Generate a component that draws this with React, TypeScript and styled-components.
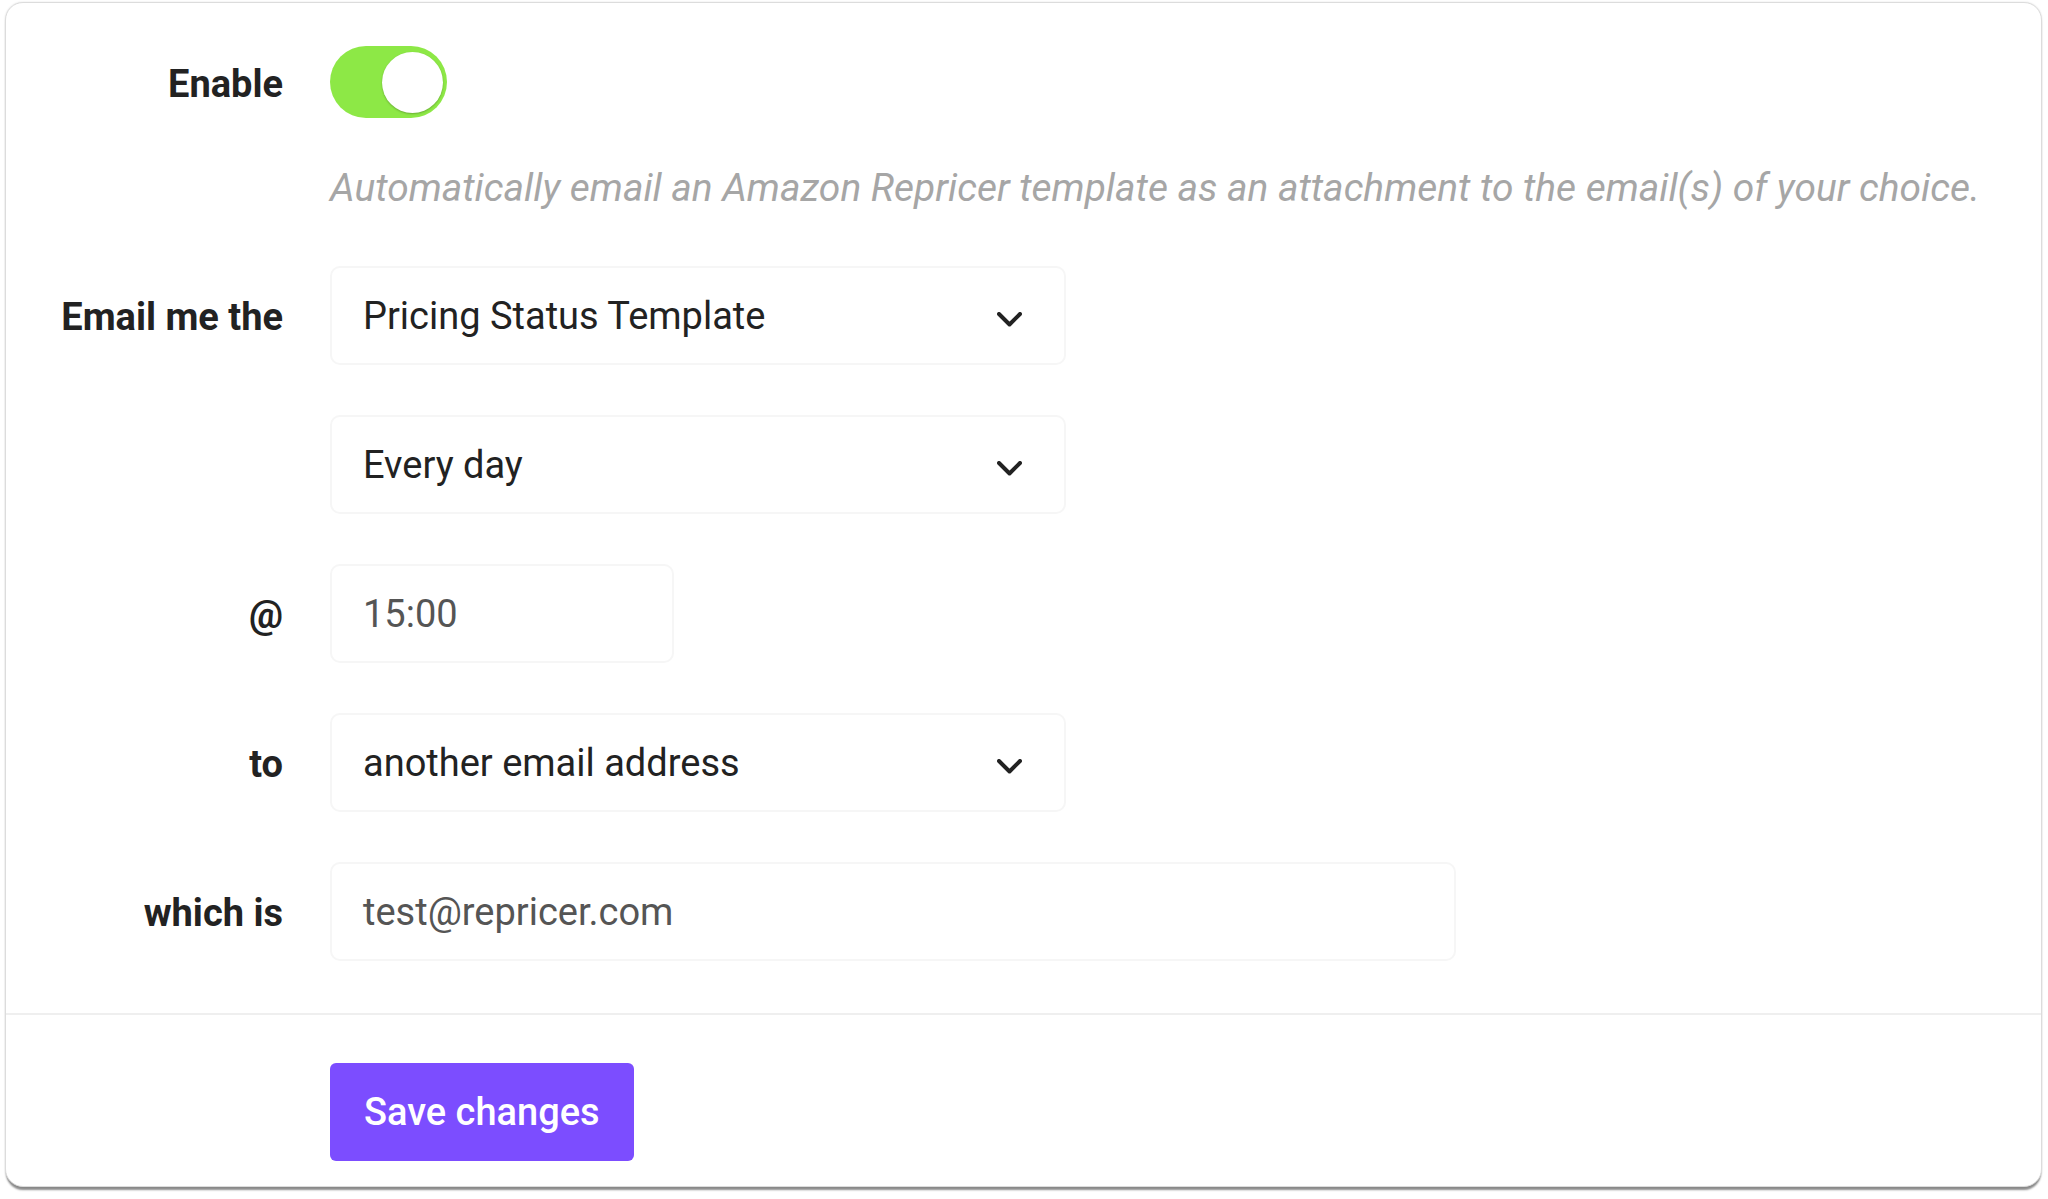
import { FC, ReactNode } from "react"
import styled, { createGlobalStyle } from "styled-components"

const GlobalStyle = createGlobalStyle`
  html, body {
    margin: 0;
    padding: 0;
    background: #ffffff;
  }
  body {
    font-family: Roboto, "Noto Sans", "Liberation Sans", sans-serif;
    color: #222222;
  }
`

const Page = styled.div`
  padding: 2px 6px 10px 5px;
`

const Card = styled.div`
  background: #ffffff;
  border: 1px solid #dcdcdc;
  border-radius: 18px;
  box-shadow: 0 4px 2px -1px rgba(0, 0, 0, 0.45), 0 0 2px rgba(0, 0, 0, 0.12);
  overflow: hidden;
`

const Form = styled.div`
  display: grid;
  grid-template-columns: 277px 1fr;
  column-gap: 47px;
  row-gap: 50px;
  align-items: center;
  padding: 43px 0 52px;
`

const Label = styled.div`
  text-align: right;
  font-size: 38px;
  font-weight: 700;
  color: #222222;
  line-height: 1.2;
  padding-top: 5px;
`

const Description = styled.div`
  font-size: 38.9px;
  font-style: italic;
  color: #a6a6a6;
  line-height: 43px;
  margin: -2px 0 7px;
  white-space: nowrap;
`

const Toggle = styled.div<{ $on: boolean }>`
  width: 117px;
  height: 72px;
  border-radius: 36px;
  background: ${({ $on }) => ($on ? "#8de846" : "#d0d0d0")};
  display: flex;
  align-items: center;
  justify-content: ${({ $on }) => ($on ? "flex-end" : "flex-start")};
  padding: 0 4px;
  box-sizing: border-box;
`

const Knob = styled.div`
  width: 61px;
  height: 61px;
  border-radius: 50%;
  background: #ffffff;
  box-shadow: 0 1px 2px rgba(0, 0, 0, 0.25);
`

const Box = styled.div<{ $width: number; $muted?: boolean }>`
  width: ${({ $width }) => $width}px;
  height: 99px;
  box-sizing: border-box;
  border: 2px solid #f6f6f6;
  border-radius: 10px;
  display: flex;
  align-items: center;
  justify-content: space-between;
  padding: 0 42px 0 31px;
  font-size: 38px;
  color: ${({ $muted }) => ($muted ? "#555555" : "#222222")};
`

const Chevron = styled.svg`
  width: 25px;
  height: 16px;
  margin-top: 8px;
  flex: none;
`

const Footer = styled.div`
  border-top: 2px solid #efefef;
  padding: 48px 0 25px 324px;
`

const SaveButton = styled.button`
  height: 98px;
  padding: 0 34px;
  border: none;
  border-radius: 6px;
  background: #7c4dff;
  color: #ffffff;
  font-family: Roboto, "Noto Sans", sans-serif;
  font-size: 38px;
  font-weight: 500;
  cursor: pointer;
`

const Select: FC<{ value: string; width?: number }> = ({ value, width = 736 }) => (
  <Box $width={width}>
    <span>{value}</span>
    <Chevron viewBox="0 0 25 16">
      <polyline
        points="2,2 12.5,12.5 23,2"
        fill="none"
        stroke="#222"
        strokeWidth="4"
        strokeLinecap="round"
        strokeLinejoin="round"
      />
    </Chevron>
  </Box>
)

const Field: FC<{ label?: string; children: ReactNode }> = ({ label, children }) => (
  <>
    <Label>{label}</Label>
    <div>{children}</div>
  </>
)

export default function App() {
  return (
    <Page>
      <GlobalStyle />
      <Card>
        <Form>
          <Field label="Enable">
            <Toggle $on>
              <Knob />
            </Toggle>
          </Field>
          <Field>
            <Description>
              Automatically email an Amazon Repricer template as an attachment to the email(s) of your
              choice.
            </Description>
          </Field>
          <Field label="Email me the">
            <Select value="Pricing Status Template" />
          </Field>
          <Field>
            <Select value="Every day" />
          </Field>
          <Field label="@">
            <Box $width={344} $muted>
              15:00
            </Box>
          </Field>
          <Field label="to">
            <Select value="another email address" />
          </Field>
          <Field label="which is">
            <Box $width={1126} $muted>
              test@repricer.com
            </Box>
          </Field>
        </Form>
        <Footer>
          <SaveButton>Save changes</SaveButton>
        </Footer>
      </Card>
    </Page>
  )
}
